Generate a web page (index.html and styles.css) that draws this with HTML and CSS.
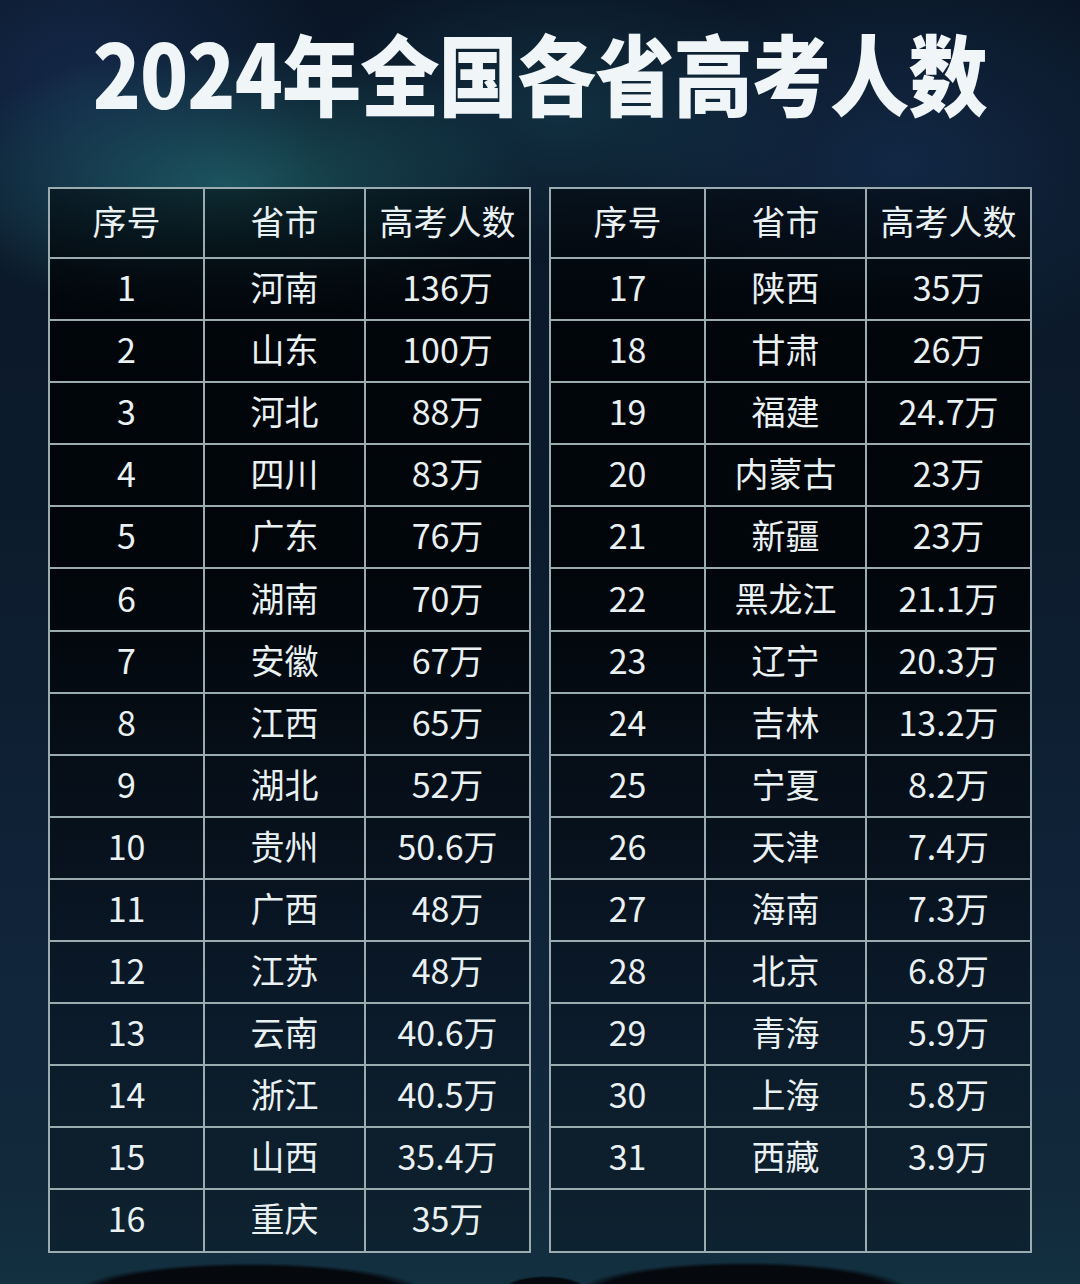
FILE: index.html
```html
<!DOCTYPE html>
<html lang="zh-CN">
<head>
<meta charset="utf-8">
<title>2024年全国各省高考人数</title>
<link rel="stylesheet" href="styles.css">
</head>
<body>
<div class="page">
  <h1 class="title"><span class="title-text">2024年全国各省高考人数</span></h1>
  <div class="tables">
    <div class="grid">
      <div class="cell head">序号</div><div class="cell head">省市</div><div class="cell head">高考人数</div>
      <div class="cell">1</div><div class="cell">河南</div><div class="cell">136万</div>
      <div class="cell">2</div><div class="cell">山东</div><div class="cell">100万</div>
      <div class="cell">3</div><div class="cell">河北</div><div class="cell">88万</div>
      <div class="cell">4</div><div class="cell">四川</div><div class="cell">83万</div>
      <div class="cell">5</div><div class="cell">广东</div><div class="cell">76万</div>
      <div class="cell">6</div><div class="cell">湖南</div><div class="cell">70万</div>
      <div class="cell">7</div><div class="cell">安徽</div><div class="cell">67万</div>
      <div class="cell">8</div><div class="cell">江西</div><div class="cell">65万</div>
      <div class="cell">9</div><div class="cell">湖北</div><div class="cell">52万</div>
      <div class="cell">10</div><div class="cell">贵州</div><div class="cell">50.6万</div>
      <div class="cell">11</div><div class="cell">广西</div><div class="cell">48万</div>
      <div class="cell">12</div><div class="cell">江苏</div><div class="cell">48万</div>
      <div class="cell">13</div><div class="cell">云南</div><div class="cell">40.6万</div>
      <div class="cell">14</div><div class="cell">浙江</div><div class="cell">40.5万</div>
      <div class="cell">15</div><div class="cell">山西</div><div class="cell">35.4万</div>
      <div class="cell">16</div><div class="cell">重庆</div><div class="cell">35万</div>
    </div>
    <div class="grid">
      <div class="cell head">序号</div><div class="cell head">省市</div><div class="cell head">高考人数</div>
      <div class="cell">17</div><div class="cell">陕西</div><div class="cell">35万</div>
      <div class="cell">18</div><div class="cell">甘肃</div><div class="cell">26万</div>
      <div class="cell">19</div><div class="cell">福建</div><div class="cell">24.7万</div>
      <div class="cell">20</div><div class="cell">内蒙古</div><div class="cell">23万</div>
      <div class="cell">21</div><div class="cell">新疆</div><div class="cell">23万</div>
      <div class="cell">22</div><div class="cell">黑龙江</div><div class="cell">21.1万</div>
      <div class="cell">23</div><div class="cell">辽宁</div><div class="cell">20.3万</div>
      <div class="cell">24</div><div class="cell">吉林</div><div class="cell">13.2万</div>
      <div class="cell">25</div><div class="cell">宁夏</div><div class="cell">8.2万</div>
      <div class="cell">26</div><div class="cell">天津</div><div class="cell">7.4万</div>
      <div class="cell">27</div><div class="cell">海南</div><div class="cell">7.3万</div>
      <div class="cell">28</div><div class="cell">北京</div><div class="cell">6.8万</div>
      <div class="cell">29</div><div class="cell">青海</div><div class="cell">5.9万</div>
      <div class="cell">30</div><div class="cell">上海</div><div class="cell">5.8万</div>
      <div class="cell">31</div><div class="cell">西藏</div><div class="cell">3.9万</div>
      <div class="cell"></div><div class="cell"></div><div class="cell"></div>
    </div>
  </div>
</div>
</body>
</html>
```

FILE: styles.css
```css
* { box-sizing: border-box; }

html, body {
  margin: 0;
  padding: 0;
}

body {
  width: 1080px;
  height: 1284px;
  overflow: hidden;
  font-family: "Noto Sans CJK SC", "Noto Sans", sans-serif;
  color: #eaf1f2;
  background:
    radial-gradient(ellipse 175px 30px at 250px 1293px, #05080d 88%, rgba(5,8,13,0) 100%),
    radial-gradient(ellipse 170px 32px at 745px 1294px, #05080d 88%, rgba(5,8,13,0) 100%),
    radial-gradient(ellipse 40px 12px at 545px 1288px, #05080d 85%, rgba(5,8,13,0) 100%),
    radial-gradient(ellipse 300px 140px at 230px 185px, rgba(42,140,140,0.5), rgba(42,140,140,0) 100%),
    radial-gradient(ellipse 260px 140px at 560px 110px, rgba(30,100,120,0.32), rgba(30,100,120,0) 100%),
    radial-gradient(ellipse 300px 200px at 900px 160px, rgba(30,70,120,0.35), rgba(30,70,120,0) 100%),
    radial-gradient(ellipse 260px 200px at 80px 80px, rgba(30,60,110,0.45), rgba(30,60,110,0) 100%),
    linear-gradient(to bottom, #0a1626 0%, #0c1b2c 40%, #10243a 75%, #12293b 92%, #123040 100%);
}

.page {
  display: flex;
  flex-direction: column;
  align-items: center;
}

.title {
  margin: 26px 0 0 0;
  height: 90px;
  line-height: 90px;
  font-size: 88px;
  font-weight: 900;
  color: #f0f5f7;
  text-align: center;
  white-space: nowrap;
}

.title-text {
  display: inline-block;
  transform: scaleX(0.9);
  letter-spacing: -1px;
}

.tables {
  margin-top: 71px;
  display: flex;
  gap: 18px;
}

.grid {
  display: grid;
  grid-template-columns: 155px 161px 165px;
  grid-template-rows: 70px repeat(16, 62.1px);
  border-top: 2px solid #9aacaf;
  border-left: 2px solid #9aacaf;
  background: linear-gradient(to bottom,
    rgba(0,3,6,0.5) 0%,
    rgba(0,3,6,0.88) 12%,
    rgba(0,3,6,0.9) 35%,
    rgba(0,3,6,0.6) 55%,
    rgba(0,3,6,0.3) 80%,
    rgba(0,3,6,0.25) 100%);
}

.cell {
  display: flex;
  align-items: center;
  justify-content: center;
  border-right: 2px solid #9aacaf;
  border-bottom: 2px solid #9aacaf;
  font-size: 34px;
  line-height: 1;
  padding-bottom: 4px;
  white-space: nowrap;
}
```
